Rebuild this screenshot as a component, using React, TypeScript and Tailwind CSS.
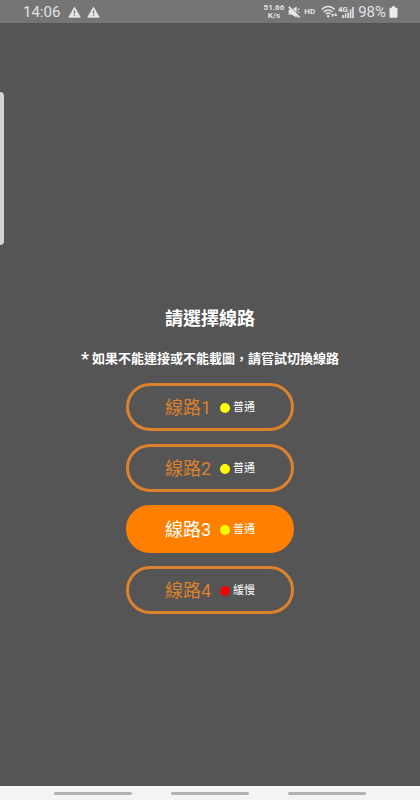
import { useState } from "react"
import clsx from "clsx"

type Route = { id: number; status: string; slow?: boolean }

const routes: Route[] = [
  { id: 1, status: "普通" },
  { id: 2, status: "普通" },
  { id: 3, status: "普通" },
  { id: 4, status: "緩慢", slow: true },
]

function WarningIcon() {
  return (
    <svg viewBox="0 0 13 12" className="h-3 w-[13px]" aria-hidden="true">
      <path d="M6.5 1.2 12.3 11.2H.7Z" fill="#e6e6e6" stroke="#e6e6e6" strokeWidth=".8" strokeLinejoin="round" />
      <path d="M6.5 4.6v3.2M6.5 8.7v1.3" stroke="#757575" strokeWidth="1.3" />
    </svg>
  )
}

function MuteIcon() {
  return (
    <svg viewBox="0 0 12 12" className="size-3" aria-hidden="true">
      <path d="M.6 3.8h3L8.6.4v11L3.6 8.4h-3Z" fill="#e6e6e6" />
      <path d="M9.6 4.2 11.4 2.6M9.8 6.3h1.8" stroke="#e6e6e6" strokeWidth="1.1" />
      <path d="M2.4.6 12 10" stroke="#757575" strokeWidth=".8" />
      <path d="M.9.9 11.4 11.4" stroke="#e6e6e6" strokeWidth="1.8" />
    </svg>
  )
}

function WifiIcon() {
  return (
    <svg viewBox="0 0 17 13" className="h-[13px] w-[17px]" fill="none" stroke="#e6e6e6" aria-hidden="true">
      <path d="M.7 4.5C4.4.6 10 .6 13.7 4.5M2.8 6.9c2.5-2.6 6.3-2.6 8.8 0M4.8 9.1c1.4-1.4 3.4-1.4 4.8 0" strokeWidth="1.5" />
      <circle cx="7.2" cy="11.2" r="1.2" fill="#e6e6e6" stroke="none" />
      <path d="M10.2 9h3l-1.5 3.4ZM13.2 11h3l-1.5-3.4Z" fill="#e6e6e6" stroke="none" />
    </svg>
  )
}

function SignalIcon() {
  return (
    <svg viewBox="0 0 16 14" className="h-[14px] w-4" aria-hidden="true">
      <text x="0" y="7" fill="#e6e6e6" fontSize="8" fontWeight="700" fontFamily="Roboto, sans-serif">4G</text>
      <path d="M5 13v-3M7.6 13V8.6M10.2 13V7.6M12.6 13V4.5M15 13V2" stroke="#dedede" strokeWidth="1.7" />
    </svg>
  )
}

function BatteryIcon() {
  return (
    <svg viewBox="0 0 9 12" className="h-3 w-[9px]" aria-hidden="true">
      <path d="M3 .3h3v1.5h1.7q.8 0 .8.8v8.3q0 .8-.8.8H1.3q-.8 0-.8-.8V2.6q0-.8.8-.8H3Z" fill="#ececec" />
    </svg>
  )
}

function StatusBar() {
  return (
    <header className="flex h-[23px] shrink-0 items-center bg-[#757575] pr-[22px] pl-[23px] text-[15px] leading-4 text-[#e2e2e2]">
      <span>14:06</span>
      <div className="ml-2 flex gap-[6px]">
        <WarningIcon />
        <WarningIcon />
      </div>
      <div className="ml-auto flex items-center">
        <div className="flex flex-col items-center text-[8px] leading-[8px] font-bold">
          <span>51.66</span>
          <span>K/s</span>
        </div>
        <div className="ml-1 flex items-center gap-1">
          <MuteIcon />
          <span className="text-[8px] font-bold">HD</span>
        </div>
        <div className="mr-1 ml-[6px] flex items-center">
          <WifiIcon />
          <SignalIcon />
        </div>
        <span className="mr-[3px]">98%</span>
        <BatteryIcon />
      </div>
    </header>
  )
}

export default function App() {
  const [selected, setSelected] = useState(3)

  return (
    <div className="relative flex min-h-screen flex-col bg-[#555555] font-[Roboto,'Noto_Sans_CJK_TC',sans-serif]">
      <StatusBar />

      {/* Edge panel handle */}
      <div className="absolute top-[92px] left-0 h-[153px] w-1 rounded-r-sm bg-[#d2d4d5]" />

      <main className="flex flex-1 flex-col items-center justify-center pt-[112px] text-white">
        <h1 className="text-lg leading-6 font-bold">請選擇線路</h1>
        <p className="mt-[18px] flex items-center gap-[3px] text-[13px] leading-5 font-bold">
          <span className="text-lg leading-5 font-medium">*</span>
          <span>如果不能連接或不能載圖，請嘗試切換線路</span>
        </p>

        <div className="mt-[14px] flex flex-col gap-[13px]">
          {routes.map(route => {
            const active = route.id === selected
            return (
              <button
                key={route.id}
                type="button"
                aria-pressed={active}
                onClick={() => setSelected(route.id)}
                className={clsx(
                  "flex h-12 w-[168px] items-center justify-center rounded-full border-3 pt-0.5",
                  active ? "border-[#ff8000] bg-[#ff8000]" : "border-[#dc812c]"
                )}
              >
                <span className={clsx("text-lg leading-6", active ? "text-white" : "text-[#dc812c]")}>
                  線路{route.id}
                </span>
                <span className={clsx("ml-[9px] size-[10px] rounded-full", route.slow ? "bg-[#f50000]" : "bg-[#ffff00]")} />
                <span className="ml-[3px] text-[11px] leading-4">{route.status}</span>
              </button>
            )
          })}
        </div>
      </main>

      {/* System navigation hints */}
      <nav className="flex h-[14px] shrink-0 items-start justify-center gap-[39px] bg-[#f4f4f4] pt-[6px]">
        <button type="button" aria-label="Recents" className="h-[3px] w-[78px] rounded-full bg-[#b2b2b2]" />
        <button type="button" aria-label="Home" className="h-[3px] w-[78px] rounded-full bg-[#b2b2b2]" />
        <button type="button" aria-label="Back" className="h-[3px] w-[78px] rounded-full bg-[#b2b2b2]" />
      </nav>
    </div>
  )
}
